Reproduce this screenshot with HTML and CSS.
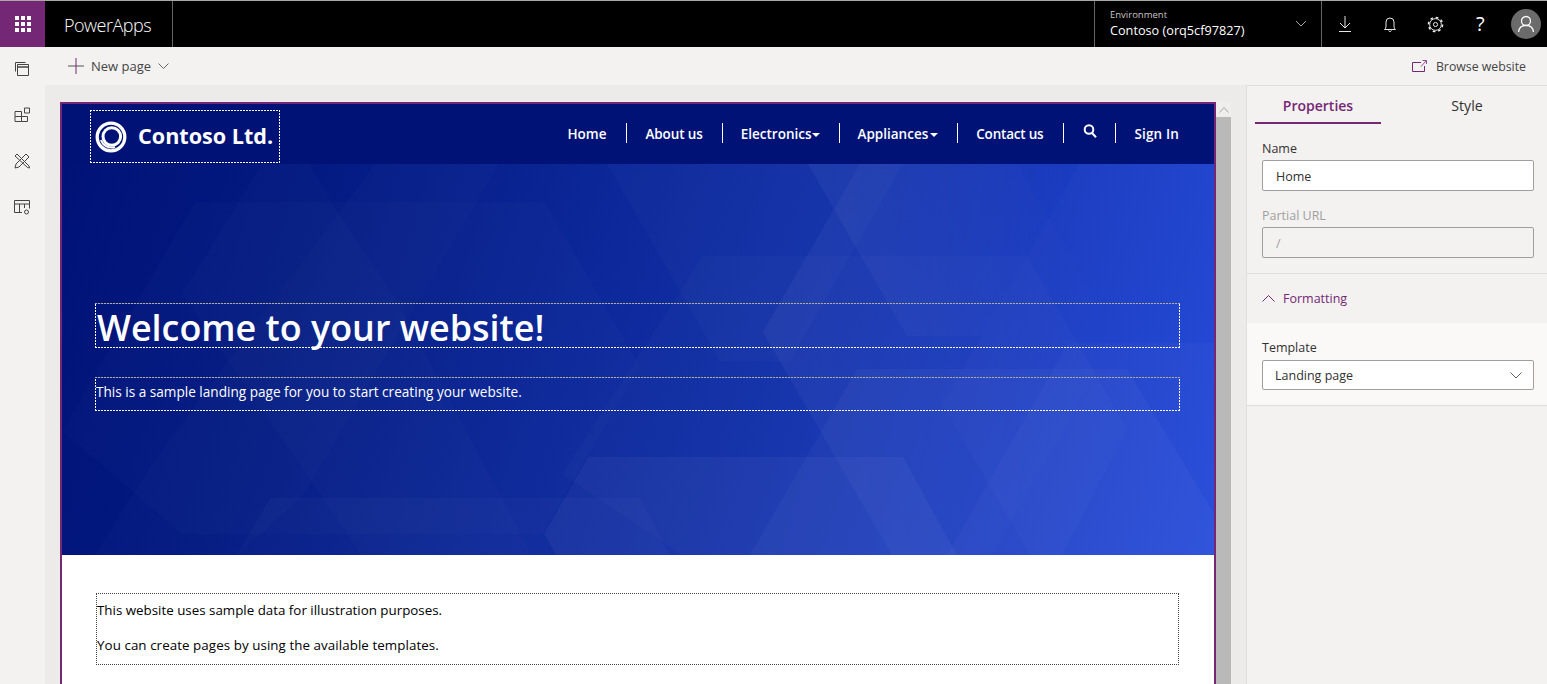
FILE: index.html
```html
<!DOCTYPE html>
<html lang="en">
<head>
<meta charset="utf-8">
<title>PowerApps</title>
<link rel="stylesheet" href="styles.css">
</head>
<body>
<div class="app">
  <header class="topbar">
    <div class="waffle">
      <svg width="16" height="16" viewBox="0 0 16 16" fill="#fff"><rect x="0" y="0" width="4" height="4"/><rect x="6" y="0" width="4" height="4"/><rect x="12" y="0" width="4" height="4"/><rect x="0" y="6" width="4" height="4"/><rect x="6" y="6" width="4" height="4"/><rect x="12" y="6" width="4" height="4"/><rect x="0" y="12" width="4" height="4"/><rect x="6" y="12" width="4" height="4"/><rect x="12" y="12" width="4" height="4"/></svg>
    </div>
    <div class="brand">PowerApps</div>
    <div class="env">
      <div class="env-text">
        <div class="env-label">Environment</div>
        <div class="env-name">Contoso (orq5cf97827)</div>
      </div>
      <svg class="env-chev" width="12" height="7" viewBox="0 0 12 7" fill="none" stroke="#a6a6a6"><path d="M1 1l5 5 5-5"/></svg>
    </div>
    <div class="top-icons">
      <svg width="14" height="18" viewBox="0 0 14 18" fill="none" stroke="#e6e6e6"><path d="M7 1v12M2 8l5 5 5-5M1 16.500h12"/></svg>
      <svg width="14" height="17" viewBox="0 0 14 17" fill="none" stroke="#e6e6e6"><path d="M1.500 13.500c1.200-1 1.500-2 1.500-3.500V6a4 4 0 0 1 8 0v4c0 1.500.3 2.500 1.500 3.500z"/><path d="M5.500 14.500c.3 1.300 2.700 1.300 3 0"/></svg>
      <svg class="gear" width="17" height="17" viewBox="0 0 18 18" fill="none" stroke="#f4f4f4"><circle cx="9" cy="9" r="6.200"/><circle cx="9" cy="9" r="7.500" stroke-width="1.500" stroke-dasharray="2.900 2.990"/><circle cx="9" cy="9" r="2.200"/></svg>
      <span class="help">?</span>
      <div class="avatar">
        <svg width="18" height="18" viewBox="0 0 18 18" fill="none" stroke="#fff" stroke-width="1.300"><circle cx="9" cy="6" r="4.500"/><path d="M1.500 17c.5-4.500 3.500-6.700 7.500-6.700s7 2.200 7.500 6.700"/></svg>
      </div>
    </div>
  </header>
  <div class="body">
    <nav class="rail">
      <svg width="14" height="14" viewBox="0 0 14 14" fill="none" stroke="#444"><path d="M.5 9.500V.5h10M2.500 11V2.500h11v11h-11z"/><path d="M3 5h10.500" stroke-width="1.500"/></svg>
      <svg width="16" height="15" viewBox="0 0 16 15" fill="none" stroke="#444"><path d="M1 4.500h6.500v5H1zM7.500 9.500V14.500H1V9.500M7.500 9.500H13.500v5h-6M10.500 1h5v5h-5z"/></svg>
      <svg width="16" height="16" viewBox="0 0 16 16" fill="none" stroke="#444"><path d="M1 15l1-4L12 1l3 3L5 14zM3 1l12 12 .5 2-2-.5L1 3z"/></svg>
      <svg width="16" height="15" viewBox="0 0 16 15" fill="none" stroke="#444"><path d="M8 12.500H.5V.5h15v8M.5 4h15M5.500 4v8.500M10.500 4v4"/><circle cx="12.500" cy="12" r="2"/></svg>
    </nav>
    <div class="main">
      <div class="toolbar">
        <div class="tool">
          <svg width="16" height="16" viewBox="0 0 16 16" fill="none"><path d="M0 8h16" stroke="#555"/><path d="M8 0v16" stroke="#742774"/></svg>
          <span>New page</span>
          <svg class="tool-chev" width="11" height="6" viewBox="0 0 11 6" fill="none" stroke="#666"><path d="M.5.500l5 5 5-5"/></svg>
        </div>
        <div class="tool tool-browse">
          <svg width="15" height="12" viewBox="0 0 15 12" fill="none" stroke="#742774"><path d="M9 2.500H.5v9h12V6"/><path d="M9 6.500l5-5.500M10.500.5H14.500V4" stroke-width=".8"/></svg>
          <span class="browse">Browse website</span>
        </div>
      </div>
      <div class="workspace">
        <div class="canvas">
          <div class="frame">
            <div class="site-header">
              <div class="logo dashed">
                <svg width="32" height="32" viewBox="0 0 32 32" fill="none" stroke="#fff"><circle cx="16" cy="16" r="13.800" stroke-width="3.300"/><circle cx="16.800" cy="15.500" r="8.800" stroke-width="3"/><path d="M6 19a11 11 0 0 0 14 7" stroke-width="2"/></svg>
                <span class="logo-text">Contoso Ltd.</span>
              </div>
              <ul class="nav">
                <li>Home</li>
                <li class="nav-about">About us</li>
                <li class="nav-elec">Electronics<i class="caret"></i></li>
                <li class="nav-appl">Appliances<i class="caret"></i></li>
                <li class="nav-contact">Contact us</li>
                <li class="nav-search"><svg width="14" height="14" viewBox="0 0 14 14" fill="none" stroke="#fff" stroke-width="2"><circle cx="6" cy="5.500" r="4.300"/><path d="M9 9l4 4.300"/></svg></li>
                <li class="nav-sign">Sign In</li>
              </ul>
            </div>
            <section class="hero">
              <svg class="facets" viewBox="0 0 1152 391" preserveAspectRatio="none" fill="#fff">
                <defs>
                  <linearGradient id="fade"><stop offset="0" stop-color="#fff" stop-opacity=".04"/><stop offset="1" stop-color="#fff" stop-opacity="0"/></linearGradient>
                </defs>
                <polygon opacity=".016" points="133,38 483,38 578,203 480,370 120,370 0,267"/>
                <polygon opacity=".016" points="313,0 437,0 240,333 175,391 33,391 90,300"/>
                <polygon opacity=".016" points="247,0 277,50 333,133 470,391 300,391 120,130 200,0"/>
                <polygon opacity=".025" points="208,334 578,334 608,391 175,391"/>
                <polygon opacity=".02" points="545,0 658,197 728,197 841,0"/>
                <polygon fill="url(#fade)" points="746,0 845,172 919,172 1018,0"/>
                <polygon fill="url(#fade)" points="798,0 955,0 1055,171 930,391 830,391 701,168"/>
                <polygon opacity=".02" points="641,92 965,92 1065,265 1000,391 620,391 500,310"/>
                <polygon opacity=".04" points="526,293 841,293 895,391 494,391 482,370"/>
                <polygon opacity=".02" points="1018,0 1152,0 1152,391 968,391 880,240"/>
                <polygon opacity=".03" points="795,205 1065,205 1152,350 1152,391 688,391"/>
                <polygon opacity=".025" points="1006,179 1152,179 1152,391 885,391"/>
              </svg>
              <div class="hero-title dashed">Welcome to your website!</div>
              <div class="hero-sub dashed">This is a sample landing page for you to start creating your website.</div>
            </section>
            <section class="content">
              <div class="content-box">
                <p>This website uses sample data for illustration purposes.</p>
                <p class="wide">You can create pages by using the available templates.</p>
              </div>
            </section>
          </div>
          <div class="scrollbar">
            <div class="scroll-up"><svg width="10" height="6" viewBox="0 0 10 6" fill="none" stroke="#a6a6a6"><path d="M.5 5.500l4.500-5 4.500 5"/></svg></div>
            <div class="scroll-thumb"></div>
          </div>
        </div>
        <aside class="panel">
          <div class="tabs">
            <div class="tab tab-active">Properties</div>
            <div class="tab">Style</div>
          </div>
          <div class="props">
            <label class="field-label">Name</label>
            <div class="input">Home</div>
            <label class="field-label muted">Partial URL</label>
            <div class="input input-disabled">/</div>
          </div>
          <div class="fmt-head">
            <svg width="13" height="7" viewBox="0 0 13 7" fill="none" stroke="#742774"><path d="M.5 6.500l6-6 6 6"/></svg>
            <span>Formatting</span>
          </div>
          <div class="fmt-body">
            <label class="field-label">Template</label>
            <div class="select">
              <span>Landing page</span>
              <svg width="12" height="7" viewBox="0 0 12 7" fill="none" stroke="#666"><path d="M.5.500l5.500 5.500 5.500-5.500"/></svg>
            </div>
          </div>
        </aside>
      </div>
    </div>
  </div>
</div>
</body>
</html>
```
FILE: styles.css
```css
* { box-sizing: border-box; }
html, body { margin: 0; height: 100%; overflow: hidden; }
body { font-family: "Open Sans", "Noto Sans", sans-serif; font-size: 13px; color: #323130; }
.app { display: flex; flex-direction: column; height: 684px; overflow: hidden; }

.topbar { flex: none; height: 47px; display: flex; align-items: stretch; background: #000; border-top: 1px solid #a8a8a8; color: #fff; }
.waffle { width: 45px; background: #742774; display: flex; align-items: center; justify-content: center; }
.brand { width: 128px; padding-left: 19px; border-right: 1px solid #666; font-size: 18px; font-weight: 300; line-height: 49px; letter-spacing: -.5px; }
.env { margin-left: auto; width: 228px; display: flex; align-items: center; justify-content: space-between; padding: 0 14px 0 15px; border-left: 1px solid #666; border-right: 1px solid #666; }
.env-label { font-size: 9.5px; color: #c8c6c4; line-height: 12px; }
.env-name { font-size: 12.7px; line-height: 18px; }
.env-chev { margin-top: -1px; }
.top-icons { width: 225px; display: flex; align-items: center; gap: 31px; padding-left: 16px; }
.gear { margin-left: -1px; }
.help { font-size: 20px; line-height: 20px; margin-left: 1px; }
.avatar { margin-left: -5px; width: 30px; height: 30px; border-radius: 50%; background: #6b6b6b; display: flex; align-items: center; justify-content: center; }

.body { flex: 1; display: flex; min-height: 0; }
.rail { flex: none; width: 45px; background: #f3f2f1; display: flex; flex-direction: column; align-items: center; gap: 31px; padding-top: 15px; padding-right: 1px; }
.main { flex: 1; display: flex; flex-direction: column; min-width: 0; }
.toolbar { flex: none; height: 38px; background: #f3f2f1; display: flex; align-items: center; justify-content: space-between; padding: 0 21px 0 23px; }
.tool { display: flex; align-items: center; gap: 7px; color: #444; }
.tool-browse { gap: 9px; }
.tool-chev { margin-left: 0; }
.browse { font-size: 12.3px; }

.workspace { flex: 1; display: flex; min-height: 0; }
.canvas { flex: 1; background: #edebe9; display: flex; align-items: stretch; padding: 17px 15px 0 15px; min-width: 0; }
.frame { flex: 1; min-width: 0; height: 640px; border: 2px solid #742774; border-bottom: 0; background: #fff; }
.scrollbar { flex: none; width: 15px; display: flex; flex-direction: column; }
.scroll-up { height: 15px; display: flex; align-items: center; justify-content: center; background: #efeeec; }
.scroll-thumb { flex: 1; background: #b9b9b9; }

.dashed {
  background:
    repeating-linear-gradient(90deg, #fff 0 2px, transparent 2px 3px) left top / 100% 1px no-repeat,
    repeating-linear-gradient(90deg, #fff 0 2px, transparent 2px 3px) left bottom / 100% 1px no-repeat,
    repeating-linear-gradient(0deg, #fff 0 2px, transparent 2px 3px) left top / 1px 100% no-repeat,
    repeating-linear-gradient(0deg, #fff 0 2px, transparent 2px 3px) right top / 1px 100% no-repeat;
}

.site-header { height: 60px; background: #001276; display: flex; justify-content: space-between; padding: 6px 35px 0 28px; color: #fff; }
.logo { width: 190px; height: 53px; display: flex; align-items: center; gap: 11px; padding-left: 5px; }
.logo-text { font-size: 21.6px; font-weight: 700; margin-top: -2px; }
.nav { list-style: none; margin: 13px 0 0; padding: 0; display: flex; height: 20px; font-weight: 600; font-size: 13.5px; line-height: 22px; }
.nav li { padding: 2px 19px 0 18px; border-left: 1px solid #fff; display: flex; align-items: center; }
.nav li:first-child { border-left: 0; }
.nav li.nav-about { padding-left: 19px; letter-spacing: -.12px; }
.nav li.nav-search { padding-left: 19px; padding-right: 18px; }
.nav li.nav-sign { padding-left: 19px; padding-right: 0; letter-spacing: .15px; }
.nav-contact { letter-spacing: -.2px; }
.caret { width: 0; height: 0; margin: 2px 0 0 1px; border: 4.5px solid transparent; border-top-color: #fff; border-bottom: 0; }
.nav-elec .caret { margin-left: 0; }
.nav-appl .caret { margin-left: 2px; }
.nav-search svg { margin-top: -7px; }

.hero { position: relative; height: 391px; background: linear-gradient(108deg, #001276 0%, #031a82 20%, #1230a8 60%, #2248da 100%); padding: 139px 34px 0 33px; color: #fff; }
.facets { position: absolute; left: 0; top: 0; width: 100%; height: 100%; }
.hero-title, .hero-sub { position: relative; box-shadow: inset 0 2px 0 -1px rgba(90, 90, 90, .5); }
.hero-title { height: 45px; font-size: 35.9px; font-weight: 600; line-height: 50px; padding-left: 2px; }
.hero-sub { height: 34px; margin-top: 29px; font-size: 13.6px; line-height: 29px; padding-left: 1px; }

.content { padding: 38px 35px 0 34px; color: #000; }
.content-box { height: 72px; border: 1px dotted #444; padding-top: 6px; }
.content-box p { margin: 0 0 15px; line-height: 20px; font-size: 13.35px; }
.content-box .wide { letter-spacing: .07px; }

.panel { flex: none; width: 301px; background: #f3f2f1; border-left: 1px solid #e1dfdd; border-top: 1px solid #e1dfdd; }
.tabs { display: flex; padding: 0 8px; height: 38px; }
.tab { width: 126px; margin-right: 47px; text-align: center; font-size: 14.2px; line-height: 40px; height: 38px; }
.tab:last-child { margin: 0; width: 78px; }
.tab-active { color: #742774; font-weight: 600; border-bottom: 2px solid #742774; font-size: 14px; }
.props { padding: 14px 13px 15px 15px; border-bottom: 1px solid #e1dfdd; }
.field-label { display: block; line-height: 22px; height: 20px; font-size: 12.5px; }
.muted { color: #a19f9d; margin-top: 14px; }
.input { height: 31px; margin-top: 2px; border: 1px solid #a19f9d; border-radius: 2px; background: #fff; padding-left: 13px; line-height: 31px; font-size: 12.5px; }
.input-disabled { background: #f3f2f1; color: #a19f9d; margin-top: 2px; }
.fmt-head { height: 49px; display: flex; align-items: center; gap: 8px; padding-left: 15px; color: #742774; font-size: 12.5px; }
.fmt-body { background: #faf9f8; padding: 14px 13px 15px 15px; border-bottom: 1px solid #e1dfdd; }
.select { height: 30px; margin-top: 3px; border: 1px solid #a19f9d; border-radius: 2px; background: #fff; display: flex; align-items: center; justify-content: space-between; padding: 0 11px 0 12px; font-size: 12.5px; }
```
